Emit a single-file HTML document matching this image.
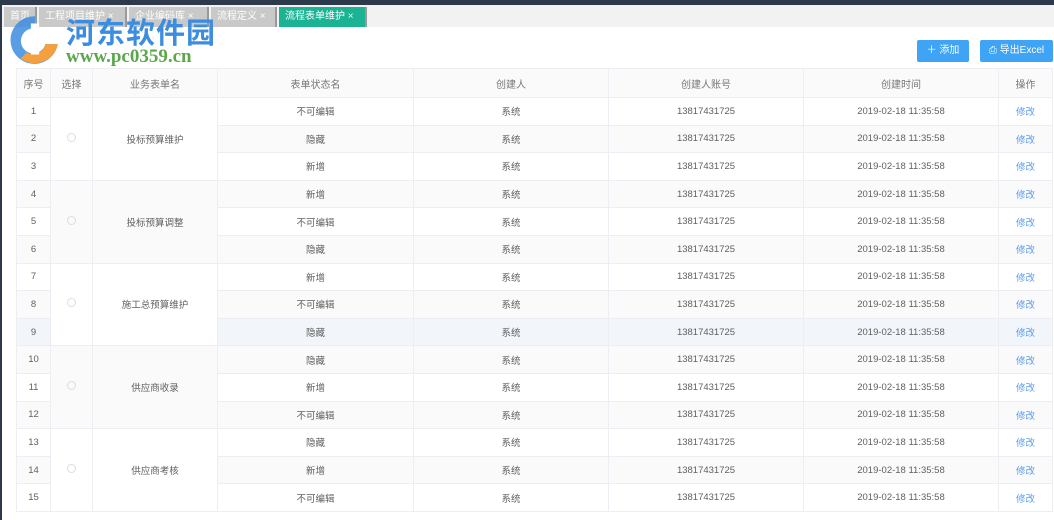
<!DOCTYPE html>
<html><head><meta charset="utf-8"><style>
*{margin:0;padding:0;box-sizing:border-box}
body{width:1054px;height:520px;overflow:hidden;background:#fff;font-family:"Liberation Sans","Noto Sans CJK SC",sans-serif;position:relative}
.top{position:absolute;left:0;top:0;width:1054px;height:5px;background:#2d3a4b}
.lb{position:absolute;left:0;top:0;width:2px;height:520px;background:#2d3a4b}
.tabs{position:absolute;left:2px;top:5px;width:1052px;height:22px;background:#f2f2f2}
.tab{position:absolute;top:2px;height:20px;background:#c9c9c9;color:#fff;font-size:10px;line-height:20px;padding-left:6px;border-right:2px solid #999}
.tab.a{background:#1ab394}
.btn{position:absolute;top:40px;height:22px;background:#3fa4f5;color:#fff;font-size:10px;line-height:22px;text-align:center;border-radius:2px}
table{position:absolute;left:16px;top:68px;border-collapse:collapse;table-layout:fixed;width:1036px}
td,th{border:1px solid #eceef3;font-size:9.5px;color:#606060;text-align:center;font-weight:normal;height:27.6px;padding:0}
th{height:29px;color:#777;background:#fafafa;font-size:10px}
tr.e td{background:#fafafa}
tr.h td{background:#f2f5fa}
td.g{background:#fafafa!important}
td.w{background:#fff!important}
.r{display:inline-block;width:9px;height:9px;border:1px solid #ddd;border-radius:50%}
.lk{color:#5b9bf0}
.wm1{position:absolute;left:66px;top:10px;font-size:29px;font-weight:bold;color:#3c8de0;font-family:"Noto Sans CJK SC",sans-serif;letter-spacing:1px}
.wm2{position:absolute;left:66px;top:46px;font-size:19px;font-weight:bold;color:#5aa84a;font-family:"Liberation Serif",serif}
</style></head><body>
<div class="top"></div><div class="lb"></div>
<div class="tabs">
<div class="tab" style="left:2px;width:33px">首页</div>
<div class="tab" style="left:37px;width:88px">工程项目维护 ×</div>
<div class="tab" style="left:127px;width:80px">企业编码库 ×</div>
<div class="tab" style="left:209px;width:66px">流程定义 ×</div>
<div class="tab a" style="left:277px;width:88px">流程表单维护 ×</div>
</div>
<svg style="position:absolute;left:6px;top:12px" width="58" height="54" viewBox="0 0 56 50"><path d="M28 3A23 23 0 1 0 50 30L38 30A12 12 0 1 1 28 15Z" fill="#3c8de0" opacity=".85"/><path d="M14 44A23 23 0 0 0 50 30L38 30A12 12 0 0 1 20 38Z" fill="#f5a03c"/><rect x="24" y="10" width="8" height="30" fill="#fff"/></svg>
<div class="wm1">河东软件园</div>
<div class="wm2">www.pc0359.cn</div>
<div class="btn" style="left:917px;width:52px">＋ 添加</div>
<div class="btn" style="left:980px;width:73px">⎙ 导出Excel</div>
<table>
<colgroup><col style="width:34px"><col style="width:42px"><col style="width:125px"><col style="width:196px"><col style="width:195px"><col style="width:195px"><col style="width:195px"><col style="width:54px"></colgroup>
<tr><th>序号</th><th>选择</th><th>业务表单名</th><th>表单状态名</th><th>创建人</th><th>创建人账号</th><th>创建时间</th><th>操作</th></tr>
<tr><td>1</td><td rowspan="3" class="w"><span class="r"></span></td><td rowspan="3" class="w">投标预算维护</td><td>不可编辑</td><td>系统</td><td>13817431725</td><td>2019-02-18 11:35:58</td><td class="lk">修改</td></tr>
<tr class="e"><td>2</td><td>隐藏</td><td>系统</td><td>13817431725</td><td>2019-02-18 11:35:58</td><td class="lk">修改</td></tr>
<tr><td>3</td><td>新增</td><td>系统</td><td>13817431725</td><td>2019-02-18 11:35:58</td><td class="lk">修改</td></tr>
<tr class="e"><td>4</td><td rowspan="3" class="g"><span class="r"></span></td><td rowspan="3" class="g">投标预算调整</td><td>新增</td><td>系统</td><td>13817431725</td><td>2019-02-18 11:35:58</td><td class="lk">修改</td></tr>
<tr><td>5</td><td>不可编辑</td><td>系统</td><td>13817431725</td><td>2019-02-18 11:35:58</td><td class="lk">修改</td></tr>
<tr class="e"><td>6</td><td>隐藏</td><td>系统</td><td>13817431725</td><td>2019-02-18 11:35:58</td><td class="lk">修改</td></tr>
<tr><td>7</td><td rowspan="3" class="w"><span class="r"></span></td><td rowspan="3" class="w">施工总预算维护</td><td>新增</td><td>系统</td><td>13817431725</td><td>2019-02-18 11:35:58</td><td class="lk">修改</td></tr>
<tr class="e"><td>8</td><td>不可编辑</td><td>系统</td><td>13817431725</td><td>2019-02-18 11:35:58</td><td class="lk">修改</td></tr>
<tr class="h"><td>9</td><td>隐藏</td><td>系统</td><td>13817431725</td><td>2019-02-18 11:35:58</td><td class="lk">修改</td></tr>
<tr class="e"><td>10</td><td rowspan="3" class="g"><span class="r"></span></td><td rowspan="3" class="g">供应商收录</td><td>隐藏</td><td>系统</td><td>13817431725</td><td>2019-02-18 11:35:58</td><td class="lk">修改</td></tr>
<tr><td>11</td><td>新增</td><td>系统</td><td>13817431725</td><td>2019-02-18 11:35:58</td><td class="lk">修改</td></tr>
<tr class="e"><td>12</td><td>不可编辑</td><td>系统</td><td>13817431725</td><td>2019-02-18 11:35:58</td><td class="lk">修改</td></tr>
<tr><td>13</td><td rowspan="3" class="w"><span class="r"></span></td><td rowspan="3" class="w">供应商考核</td><td>隐藏</td><td>系统</td><td>13817431725</td><td>2019-02-18 11:35:58</td><td class="lk">修改</td></tr>
<tr class="e"><td>14</td><td>新增</td><td>系统</td><td>13817431725</td><td>2019-02-18 11:35:58</td><td class="lk">修改</td></tr>
<tr><td>15</td><td>不可编辑</td><td>系统</td><td>13817431725</td><td>2019-02-18 11:35:58</td><td class="lk">修改</td></tr>
</table>
</body></html>
